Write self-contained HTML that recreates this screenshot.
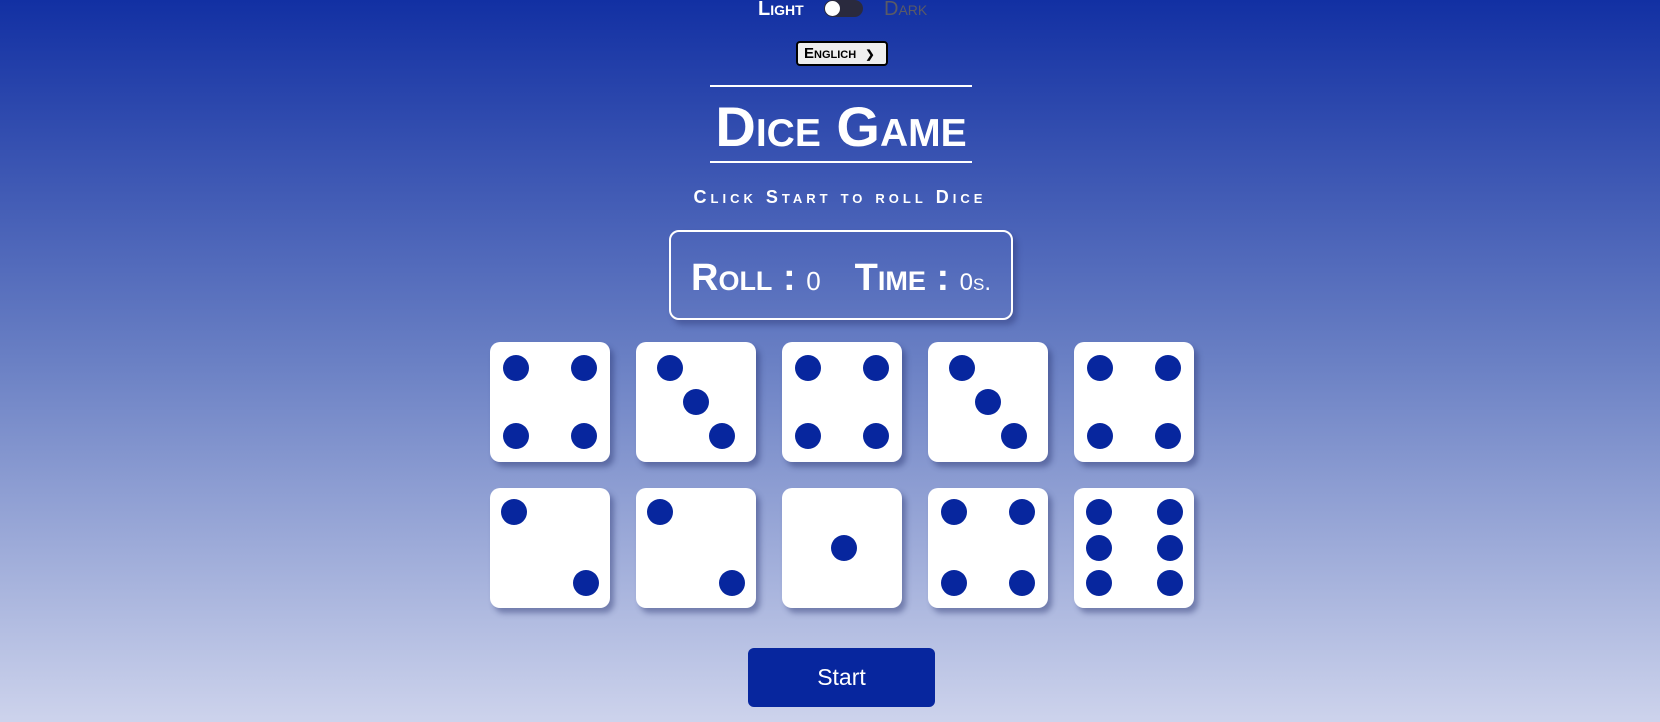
<!DOCTYPE html>
<html><head><meta charset="utf-8"><style>
*{margin:0;padding:0;box-sizing:border-box}
html,body{width:1660px;height:722px;overflow:hidden}
body{background:linear-gradient(180deg,#1230a3 0%,#6a80c4 50%,#cdd3ec 100%);font-family:"Liberation Sans",sans-serif;position:relative;color:#fff}
.a{position:absolute}
.sc{font-variant:small-caps;font-weight:bold}
.die{position:absolute;width:120px;height:120px;background:#fff;border-radius:10px;box-shadow:4px 5px 6px rgba(40,50,110,.45)}
.p{position:absolute;width:26px;height:26px;border-radius:50%;background:#07269e;transform:translate(-13px,-13px)}
</style></head><body>
<div class="a sc" style="left:758px;top:-2px;font-size:20px;">Light</div>
<div class="a" style="left:824px;top:0;width:39px;height:17px;border-radius:9px;background:#2a2a3e"></div>
<div class="a" style="left:825px;top:1px;width:15px;height:15px;border-radius:50%;background:#fff"></div>
<div class="a sc" style="left:884px;top:-2px;font-size:20px;color:#5a5a66;font-weight:normal">Dark</div>
<div class="a sc" style="left:796px;top:41px;width:92px;height:25px;border:2px solid #000;border-radius:4px;background:#eee;color:#000;font-size:15px;padding:2px 0 0 6px">Englich <span style="font-size:11px;margin-left:5px">&#10095;</span></div>
<div class="a" style="left:710px;top:85px;width:262px;height:2px;background:#fff"></div>
<div class="a sc" style="left:690px;top:92px;width:302px;text-align:center;font-size:56px;font-weight:bold;line-height:70px">Dice Game</div>
<div class="a" style="left:710px;top:161px;width:262px;height:2px;background:#fff"></div>
<div class="a sc" style="left:620px;top:187px;width:440px;text-align:center;font-size:18px;letter-spacing:4px">Click Start to roll Dice</div>
<div class="a" style="left:669px;top:230px;width:344px;height:90px;border:2px solid #fff;border-radius:10px;box-shadow:4px 5px 6px rgba(40,50,110,.4)"></div>
<div class="a sc" style="left:691px;top:256px;font-size:38px;line-height:44px;white-space:nowrap">Roll : <span style="font-weight:normal;font-size:26px">0</span><span style="display:inline-block;width:34px"></span>Time : <span style="font-weight:normal;font-size:24px">0s.</span></div>

<div class="die" style="left:490px;top:342px"><i class="p" style="left:26px;top:26px"></i><i class="p" style="left:94px;top:26px"></i><i class="p" style="left:26px;top:94px"></i><i class="p" style="left:94px;top:94px"></i></div>
<div class="die" style="left:636px;top:342px"><i class="p" style="left:34px;top:26px"></i><i class="p" style="left:60px;top:60px"></i><i class="p" style="left:86px;top:94px"></i></div>
<div class="die" style="left:782px;top:342px"><i class="p" style="left:26px;top:26px"></i><i class="p" style="left:94px;top:26px"></i><i class="p" style="left:26px;top:94px"></i><i class="p" style="left:94px;top:94px"></i></div>
<div class="die" style="left:928px;top:342px"><i class="p" style="left:34px;top:26px"></i><i class="p" style="left:60px;top:60px"></i><i class="p" style="left:86px;top:94px"></i></div>
<div class="die" style="left:1074px;top:342px"><i class="p" style="left:26px;top:26px"></i><i class="p" style="left:94px;top:26px"></i><i class="p" style="left:26px;top:94px"></i><i class="p" style="left:94px;top:94px"></i></div>

<div class="die" style="left:490px;top:488px"><i class="p" style="left:24px;top:24px"></i><i class="p" style="left:96px;top:95px"></i></div>
<div class="die" style="left:636px;top:488px"><i class="p" style="left:24px;top:24px"></i><i class="p" style="left:96px;top:95px"></i></div>
<div class="die" style="left:782px;top:488px"><i class="p" style="left:62px;top:60px"></i></div>
<div class="die" style="left:928px;top:488px"><i class="p" style="left:26px;top:24px"></i><i class="p" style="left:94px;top:24px"></i><i class="p" style="left:26px;top:95px"></i><i class="p" style="left:94px;top:95px"></i></div>
<div class="die" style="left:1074px;top:488px"><i class="p" style="left:25px;top:24px"></i><i class="p" style="left:96px;top:24px"></i><i class="p" style="left:25px;top:60px"></i><i class="p" style="left:96px;top:60px"></i><i class="p" style="left:25px;top:95px"></i><i class="p" style="left:96px;top:95px"></i></div>

<div class="a" style="left:748px;top:648px;width:187px;height:59px;background:#07269e;border-radius:6px;font-size:23px;text-align:center;line-height:59px">Start</div>
</body></html>
